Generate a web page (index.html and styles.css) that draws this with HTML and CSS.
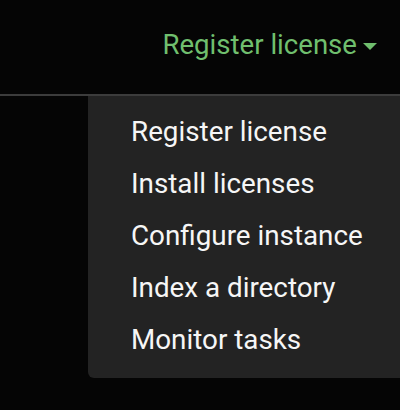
FILE: index.html
```html
<!DOCTYPE html>
<html>
<head>
<meta charset="utf-8">
<link rel="stylesheet" href="styles.css">
</head>
<body>
<header class="topbar">
  <button class="license-toggle">
    <span class="toggle-label">Register license</span>
    <span class="caret"></span>
  </button>
</header>
<nav class="dropdown">
  <a class="dropdown-item">Register license</a>
  <a class="dropdown-item">Install licenses</a>
  <a class="dropdown-item">Configure instance</a>
  <a class="dropdown-item">Index a directory</a>
  <a class="dropdown-item">Monitor tasks</a>
</nav>
</body>
</html>
```
FILE: styles.css
```css
html, body {
  margin: 0;
  padding: 0;
  background: #050505;
  width: 400px;
  height: 410px;
  overflow: hidden;
}
body {
  position: relative;
}
.topbar {
  height: 94px;
  border-bottom: 2px solid #3c3c3c;
  display: flex;
  justify-content: flex-end;
  align-items: flex-start;
  box-sizing: content-box;
}
.license-toggle {
  display: flex;
  align-items: center;
  background: none;
  border: none;
  margin: 29px 23px 0 0;
  padding: 0;
  color: #70bf6e;
  font-family: Roboto, "Noto Sans", sans-serif;
  font-size: 27.6px;
  line-height: 32px;
  cursor: pointer;
}
.caret {
  width: 0;
  height: 0;
  margin-left: 6px;
  margin-top: 3px;
  border-left: 7px solid transparent;
  border-right: 7px solid transparent;
  border-top: 7px solid #70bf6e;
}
.dropdown {
  position: absolute;
  top: 96px;
  left: 88px;
  right: 0;
  height: 282px;
  box-sizing: border-box;
  padding: 10px 0 0 43px;
  background: #232323;
  border-radius: 0 0 0 6px;
  display: flex;
  flex-direction: column;
}
.dropdown-item {
  color: #f6f6f6;
  font-family: Roboto, "Noto Sans", sans-serif;
  font-size: 27.8px;
  line-height: 52px;
  white-space: nowrap;
}
```
